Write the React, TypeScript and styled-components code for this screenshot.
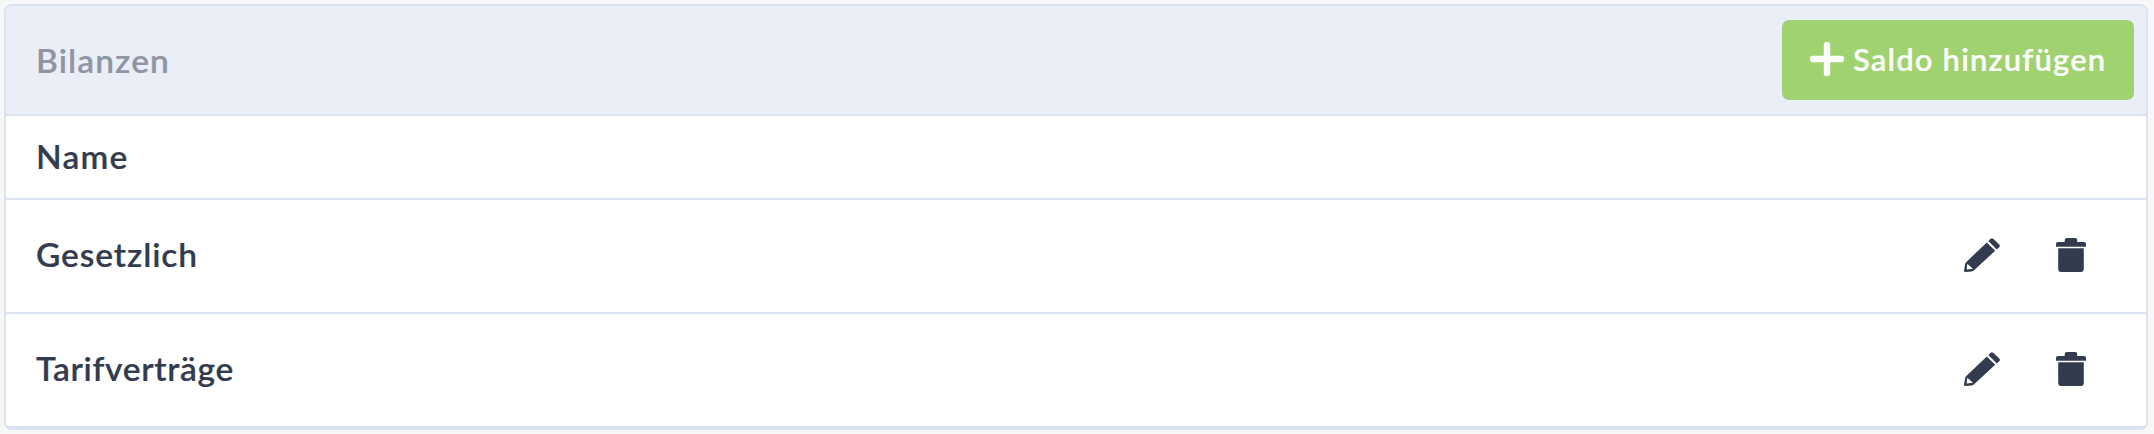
import React from "react";
import styled, { createGlobalStyle } from "styled-components";

const GlobalStyle = createGlobalStyle`
  * { box-sizing: border-box; }
  body {
    margin: 0;
    background: #f7f7f7;
    font-family: Lato, "Open Sans", sans-serif;
    color: #323c4e;
  }
`;

const Page = styled.main`
  height: 434px;
  padding: 4px 6px 4px 4px;
`;

const Card = styled.section`
  height: 426px;
  border: 2px solid #dbe3f1;
  border-radius: 8px;
  background: #fff;
`;

const Header = styled.header`
  display: flex;
  align-items: center;
  justify-content: space-between;
  height: 110px;
  padding: 0 12px 0 30px;
  background: #eaeef7;
  border-bottom: 2px solid #dbe3f1;
  border-radius: 6px 6px 0 0;
`;

const Label = styled.span<{ $spacing: number; $lift?: number; $muted?: boolean }>`
  padding-bottom: ${(p) => p.$lift ?? 2}px;
  font-size: 33.5px;
  font-weight: 600;
  line-height: 40px;
  white-space: nowrap;
  letter-spacing: ${(p) => p.$spacing}px;
  color: ${(p) => (p.$muted ? "#9095a3" : "#323c4e")};
  -webkit-text-stroke: 0.2px currentColor;
`;

const AddButton = styled.button`
  display: flex;
  align-items: center;
  width: 352px;
  height: 80px;
  padding: 0 0 2px 28px;
  gap: 9px;
  border: 0;
  border-radius: 7px;
  background: #a0d270;
  color: #fff;
  font: 600 31px/40px Lato, "Open Sans", sans-serif;
  letter-spacing: 1.15px;
  white-space: nowrap;
  -webkit-text-stroke: 0.2px currentColor;
`;

const Row = styled.div<{ $height: number }>`
  display: flex;
  align-items: center;
  justify-content: space-between;
  height: ${(p) => p.$height}px;
  padding: 0 60px 2px 30px;
  border-bottom: 2px solid #dbe3f1;
`;

const Actions = styled.div`
  display: flex;
  gap: 56px;
`;

const IconButton = styled.button`
  display: flex;
  padding: 0;
  border: 0;
  background: none;
  color: #323c4e;
`;

const Plus = () => (
  <svg width="34" height="34" viewBox="0 0 34 34" fill="#fff">
    <rect x="13.8" width="6.4" height="34" rx="2.6" />
    <rect y="13.8" width="34" height="6.4" rx="2.6" />
  </svg>
);

const Pencil = () => (
  <svg width="36" height="34" viewBox="0 0 36 34" fill="currentColor">
    <path d="M26.3 1.1Q27.8-.6 29.4.9L35.3 6.6Q36.5 8 35.2 9.3L32.9 11.6L24.5 3.2Z" />
    <path
      fillRule="evenodd"
      d="M22.8 4.6L31.2 12.7L10.1 32.2Q9.2 33.1 7.8 33.4L1.2 34Q0 34 0 32.7L1.1 26.2Q1.4 24.9 2.3 23.9ZM3.3 25.8L2.7 31.4L8.9 30.8Z"
    />
  </svg>
);

const Trash = () => (
  <svg width="30" height="34" viewBox="0 0 30 34" fill="currentColor">
    <path d="M8.7 4V2Q8.7 0 10.7 0H19.2Q21.2 0 21.2 2V4H28Q30 4 30 6V8.8H0V6Q0 4 2 4Z" />
    <path d="M2.2 10.3H27.8V31Q27.8 34 24.8 34H5.2Q2.2 34 2.2 31Z" />
  </svg>
);

const balances = [
  { name: "Gesetzlich", spacing: 0.9, height: 114 },
  { name: "Tarifverträge", spacing: 0.7, height: 114 },
];

export default function App() {
  return (
    <>
      <GlobalStyle />
      <Page>
        <Card>
          <Header>
            <Label $spacing={1.1} $lift={0} $muted>Bilanzen</Label>
            <AddButton>
              <Plus />
              Saldo hinzufügen
            </AddButton>
          </Header>
          <Row $height={84}>
            <Label $spacing={1.2} $lift={0}>Name</Label>
          </Row>
          {balances.map((b) => (
            <Row key={b.name} $height={b.height}>
              <Label $spacing={b.spacing}>{b.name}</Label>
              <Actions>
                <IconButton aria-label="Bearbeiten"><Pencil /></IconButton>
                <IconButton aria-label="Löschen"><Trash /></IconButton>
              </Actions>
            </Row>
          ))}
        </Card>
      </Page>
    </>
  );
}
